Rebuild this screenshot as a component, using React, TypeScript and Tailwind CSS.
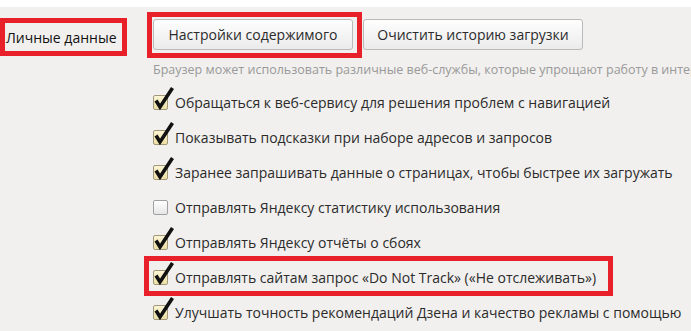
import React from "react";

function Check({ checked }: { checked: boolean }) {
  return (
    <span
      className={
        "relative block w-[15px] h-[15px] shrink-0 rounded-[2px] border " +
        (checked
          ? "border-[#a09878] bg-gradient-to-b from-[#fcf5d4] to-[#ecdfa4]"
          : "border-[#a0a0a0] bg-gradient-to-b from-[#ffffff] to-[#e6e6e6]")
      }
    >
      {checked && (
        <svg
          className="absolute left-[-1px] top-[-10px]"
          width="22"
          height="25"
          viewBox="0 0 22 25"
        >
          <path
            d="M3 14.5 L7 21 L19.5 2"
            fill="none"
            stroke="#111"
            strokeWidth="3.6"
            strokeLinejoin="miter"
          />
        </svg>
      )}
    </span>
  );
}

function Row({
  checked,
  text,
  highlight,
}: {
  checked: boolean;
  text: string;
  highlight?: boolean;
}) {
  return (
    <div className="relative flex items-center h-[35px] gap-[7px] whitespace-nowrap">
      <Check checked={checked} />
      <span className="text-[14px] text-[#2b2b2b] leading-[20px]">{text}</span>
      {highlight && (
        <div className="absolute left-[-9px] top-[-4px] w-[469px] h-[40px] border-[5px] border-[#e8202a]" />
      )}
    </div>
  );
}

export default function App() {
  const rows: { checked: boolean; text: string; highlight?: boolean }[] = [
    { checked: true, text: "Обращаться к веб-сервису для решения проблем с навигацией" },
    { checked: true, text: "Показывать подсказки при наборе адресов и запросов" },
    { checked: true, text: "Заранее запрашивать данные о страницах, чтобы быстрее их загружать" },
    { checked: false, text: "Отправлять Яндексу статистику использования" },
    { checked: true, text: "Отправлять Яндексу отчёты о сбоях" },
    { checked: true, text: "Отправлять сайтам запрос «Do Not Track» («Не отслеживать»)", highlight: true },
    { checked: true, text: "Улучшать точность рекомендаций Дзена и качество рекламы с помощью" },
  ];
  return (
    <div
      className="w-[691px] h-[331px] overflow-hidden bg-[#f1f0ee]"
      style={{ fontFamily: '"Open Sans", "Noto Sans", sans-serif' }}
    >
      <div className="h-[7px] bg-white" />
      <div className="flex">
        <div className="w-[147px] shrink-0">
          <div className="mt-[11px] w-[127px] h-[38px] border-[5px] border-[#e8202a] flex items-center pl-[1px] text-[14px] text-[#111] whitespace-nowrap">
            Личные данные
          </div>
        </div>
        <div className="flex-1 min-w-0">
          <div className="flex items-start mt-[5px]">
            <div className="w-[215px] h-[46px] border-[5px] border-[#e8202a] pl-[1px] pt-[2px]">
              <button className="w-[200px] h-[31px] rounded-[3px] border border-[#bababa] bg-gradient-to-b from-[#fefefe] to-[#ebebeb] text-[14px] text-[#2b2b2b] whitespace-nowrap">
                Настройки содержимого
              </button>
            </div>
            <button className="ml-[1px] mt-[7px] w-[220px] h-[31px] rounded-[3px] border border-[#bababa] bg-gradient-to-b from-[#fefefe] to-[#ebebeb] text-[14px] text-[#2b2b2b] whitespace-nowrap">
              Очистить историю загрузки
            </button>
          </div>
          <div className="mt-[2px] pl-[6px] h-[20px] leading-[20px] text-[12.5px] text-[#999] whitespace-nowrap">
            Браузер может использовать различные веб-службы, которые упрощают работу в интернете
          </div>
          <div className="pl-[6px] mt-[5px]">
            {rows.map((r, i) => (
              <Row key={i} checked={r.checked} text={r.text} highlight={r.highlight} />
            ))}
          </div>
        </div>
      </div>
    </div>
  );
}
